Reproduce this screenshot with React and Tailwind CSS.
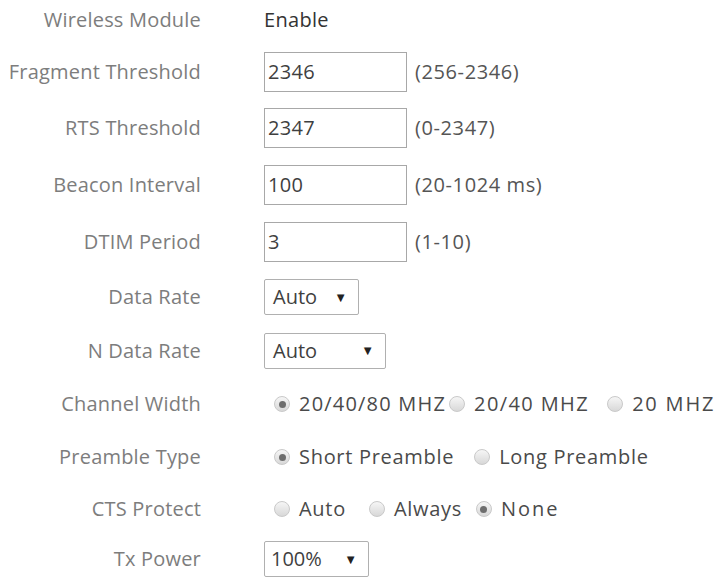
import React from "react";

const font = { fontFamily: '"Open Sans", "Liberation Sans", sans-serif' };

function Label({ children }) {
  return (
    <div className="w-[201px] shrink-0 text-right text-[20px] leading-none text-[#7d7d7d] tracking-[0.2px]">
      {children}
    </div>
  );
}

function Radio({ checked }) {
  return (
    <span className="inline-flex w-[16px] h-[16px] shrink-0 items-center justify-center rounded-full border border-[#c9c9c9] bg-gradient-to-b from-[#f6f6f6] to-[#d8d8d8]">
      {checked && <span className="w-[7px] h-[7px] rounded-full bg-[#6e6e6e]" />}
    </span>
  );
}

function RadioOpt({ checked, children, gapAfter, track = "tracking-[0.7px]" }) {
  return (
    <div className={`flex items-center ${gapAfter}`}>
      <Radio checked={checked} />
      <span className={`ml-[9px] text-[20px] leading-none text-[#4a4a4a] ${track}`}>{children}</span>
    </div>
  );
}

function TextBox({ value }) {
  return (
    <div className="w-[143px] h-[40px] shrink-0 border border-[#a8a8a8] flex items-center pl-[3px] text-[20px] leading-none text-[#3f3f3f] bg-white tracking-[0.3px]">
      {value}
    </div>
  );
}

function Select({ value, w, pl }) {
  return (
    <div className={`${w} h-[36px] shrink-0 border border-[#b0b0b0] rounded-[2px] flex items-center justify-between ${pl} pr-[11px] text-[20px] leading-none text-[#3f3f3f] bg-white`}>
      <span>{value}</span>
      <span className="text-[13px] text-[#222]">▼</span>
    </div>
  );
}

function Range({ children }) {
  return <span className="ml-[8px] text-[20px] leading-none text-[#555] tracking-[0.6px]">{children}</span>;
}

export default function App() {
  return (
    <div className="w-[723px] h-[579px] bg-white overflow-hidden" style={font}>
      <div className="flex flex-col">
        <div className="flex items-center h-[40px]">
          <Label>Wireless Module</Label>
          <span className="ml-[63px] text-[20px] leading-none text-[#333] tracking-[0.3px]">Enable</span>
        </div>
        <div className="flex items-center h-[41px] mt-[11px]">
          <Label>Fragment Threshold</Label>
          <div className="ml-[63px] flex items-center">
            <TextBox value="2346" />
            <Range>(256-2346)</Range>
          </div>
        </div>
        <div className="flex items-center h-[40px] mt-[16px]">
          <Label>RTS Threshold</Label>
          <div className="ml-[63px] flex items-center">
            <TextBox value="2347" />
            <Range>(0-2347)</Range>
          </div>
        </div>
        <div className="flex items-center h-[40px] mt-[17px]">
          <Label>Beacon Interval</Label>
          <div className="ml-[63px] flex items-center">
            <TextBox value="100" />
            <Range>(20-1024 ms)</Range>
          </div>
        </div>
        <div className="flex items-center h-[40px] mt-[17px]">
          <Label>DTIM Period</Label>
          <div className="ml-[63px] flex items-center">
            <TextBox value="3" />
            <Range>(1-10)</Range>
          </div>
        </div>
        <div className="flex items-center h-[36px] mt-[17px]">
          <Label>Data Rate</Label>
          <div className="ml-[63px] flex items-center">
            <Select value="Auto" w="w-[95px]" pl="pl-[8px]" />
          </div>
        </div>
        <div className="flex items-center h-[37px] mt-[17px]">
          <Label>N Data Rate</Label>
          <div className="ml-[63px] flex items-center">
            <Select value="Auto" w="w-[122px]" pl="pl-[8px]" />
          </div>
        </div>
        <div className="flex items-center h-[36px] mt-[17px]">
          <Label>Channel Width</Label>
          <div className="ml-[73px] flex items-center">
            <RadioOpt checked gapAfter="mr-[3px]" track="tracking-[1.2px]">20/40/80 MHZ</RadioOpt>
            <RadioOpt gapAfter="mr-[18px]" track="tracking-[1.4px]">20/40 MHZ</RadioOpt>
            <RadioOpt track="tracking-[1.8px]">20 MHZ</RadioOpt>
          </div>
        </div>
        <div className="flex items-center h-[36px] mt-[17px]">
          <Label>Preamble Type</Label>
          <div className="ml-[73px] flex items-center">
            <RadioOpt checked gapAfter="mr-[20px]">Short Preamble</RadioOpt>
            <RadioOpt>Long Preamble</RadioOpt>
          </div>
        </div>
        <div className="flex items-center h-[36px] mt-[16px]">
          <Label>CTS Protect</Label>
          <div className="ml-[73px] flex items-center">
            <RadioOpt gapAfter="mr-[23px]">Auto</RadioOpt>
            <RadioOpt gapAfter="mr-[14px]">Always</RadioOpt>
            <RadioOpt checked track="tracking-[2px]">None</RadioOpt>
          </div>
        </div>
        <div className="flex items-center h-[36px] mt-[14px]">
          <Label>Tx Power</Label>
          <div className="ml-[63px] flex items-center">
            <Select value="100%" w="w-[105px]" pl="pl-[6px]" />
          </div>
        </div>
      </div>
    </div>
  );
}
